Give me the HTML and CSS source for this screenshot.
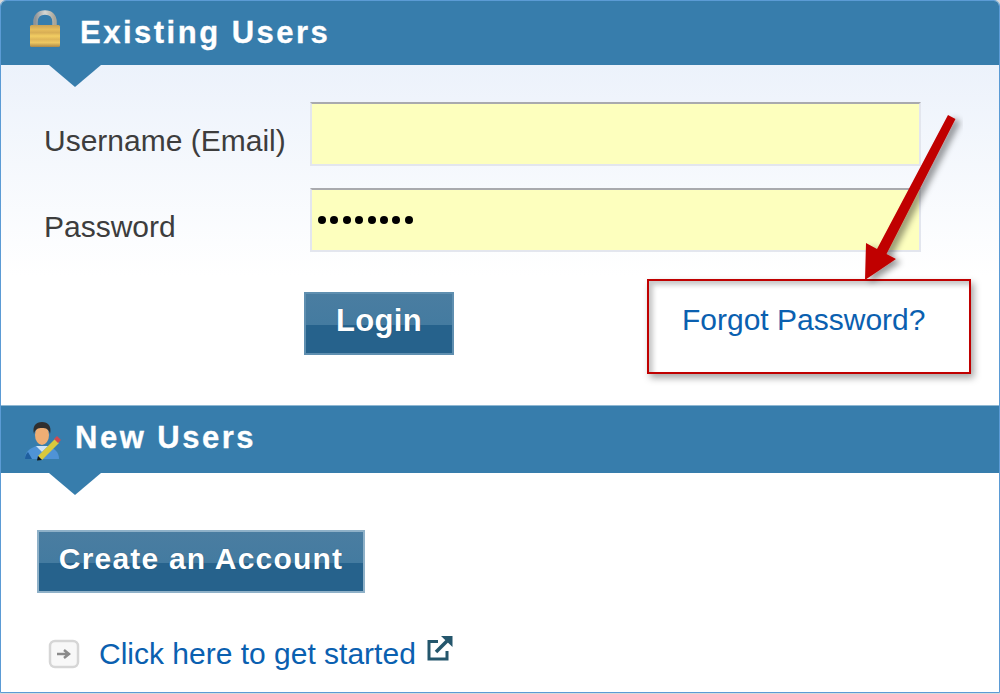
FILE: index.html
```html
<!DOCTYPE html>
<html>
<head>
    <title>Login</title>
    <link rel="stylesheet" href="styles.css">
</head>
<body>
    <div class="frame">
        <div class="bar bar-existing">
            <svg class="lock-icon" width="32" height="38" viewBox="0 0 32 38">
                <defs>
                    <linearGradient id="lockBody" x1="0" y1="0" x2="0" y2="1">
                        <stop offset="0" stop-color="#c9a257"/>
                        <stop offset="0.2" stop-color="#e6bd5c"/>
                        <stop offset="0.35" stop-color="#d8ae55"/>
                        <stop offset="0.5" stop-color="#f2cd62"/>
                        <stop offset="0.65" stop-color="#dfb658"/>
                        <stop offset="0.8" stop-color="#eec862"/>
                        <stop offset="1" stop-color="#ab8848"/>
                    </linearGradient>
                    <linearGradient id="lockShackle" x1="0" y1="0" x2="1" y2="0">
                        <stop offset="0" stop-color="#8f9498"/>
                        <stop offset="0.5" stop-color="#d8d8d4"/>
                        <stop offset="1" stop-color="#a9a69a"/>
                    </linearGradient>
                </defs>
                <path d="M6.500 18V12C6.500 6 10 2.500 16 2.500S25.500 6 25.500 12V18" fill="none" stroke="url(#lockShackle)" stroke-width="4.500"/>
                <rect x="1" y="15" width="30" height="22" rx="1.500" fill="url(#lockBody)"/>
            </svg>
            <h2 class="title-existing">Existing Users</h2>
        </div>
        <div class="notch"></div>

        <div class="existing">
            <div class="field">
                <label class="field-label" for="username">Username (Email)</label>
                <input class="field-input" type="text" id="username">
            </div>
            <div class="field field-password">
                <label class="field-label" for="password">Password</label>
                <div class="field-input password-dots" id="password">
                    <span></span><span></span><span></span><span></span><span></span><span></span><span></span><span></span>
                </div>
            </div>
            <div class="actions">
                <button class="btn btn-login"><span>Login</span></button>
                <div class="callout"><a href="#">Forgot Password?</a></div>
            </div>
        </div>

        <div class="bar bar-new">
            <svg class="user-icon" width="38" height="40" viewBox="0 0 38 40">
                <path d="M1 38C1 31 5 28 12 25H24C31 28 35 31 35 38Z" fill="#4f93d6"/>
                <path d="M1 38C1 35 2 33 4 31L8 38Z" fill="#1f5f9e"/>
                <path d="M12 25L18 31L24 25Z" fill="#cfe4f6"/>
                <ellipse cx="18" cy="14" rx="7" ry="10" fill="#eeae74"/>
                <path d="M10 13C8 5 12 1 18 1S28 5 26 13C25 8 22 7 18 7S11 8 10 13Z" fill="#2f2f30"/>
                <path d="M14 35L31 18L35 22L18 39Z" fill="#d9c83c"/>
                <path d="M30 18L33 15L37 19L34 22Z" fill="#cf4a50"/>
                <path d="M14 35L13 39.500L18 39Z" fill="#101214"/>
            </svg>
            <h2 class="title-new">New Users</h2>
        </div>
        <div class="notch"></div>

        <div class="new-users">
            <button class="btn btn-create"><span>Create an Account</span></button>
            <div class="started">
                <svg width="32" height="30" viewBox="0 0 32 30">
                    <rect x="2" y="2" width="28" height="26" rx="5" fill="#f8f8f8" stroke="#d6d6d6" stroke-width="2.500"/>
                    <path d="M9 15H21M16 11L21 15L16 19" fill="none" stroke="#8b8b8b" stroke-width="2.500"/>
                </svg>
                <a href="#">Click here to get started</a>
                <svg class="external" width="26" height="26" viewBox="0 0 26 26">
                    <path d="M11 6.500H2V24H20V16" fill="none" stroke="#24566c" stroke-width="3"/>
                    <path d="M9 17L20 6" stroke="#24566c" stroke-width="3.500"/>
                    <path d="M14 1H25.500V12Z" fill="#24566c"/>
                </svg>
            </div>
        </div>

        <svg class="arrow" width="120" height="190" viewBox="0 0 120 190">
            <defs>
                <filter id="arrowShadow" x="-30%" y="-30%" width="160%" height="160%">
                    <feDropShadow dx="5" dy="3" stdDeviation="3" flood-color="#000" flood-opacity="0.4"/>
                </filter>
            </defs>
            <path d="M105 5L112.500 9L43.500 144L53 149L22 170L23 133L34 139Z" fill="#c00000" filter="url(#arrowShadow)"/>
        </svg>
    </div>
</body>
</html>
```
FILE: styles.css
```css
* {
    box-sizing: border-box;
}
html, body {
    margin: 0;
    padding: 0;
}
body {
    width: 1000px;
    height: 694px;
    overflow: hidden;
    font-family: "Liberation Sans", Arial, sans-serif;
    background-color: #d9d9d9;
}
.frame {
    position: relative;
    height: 693px;
    background-color: white;
    border: 1px solid #5b9bd5;
    border-radius: 6px 6px 0 0;
    overflow: hidden;
}
.bar {
    display: flex;
    align-items: center;
    background-color: #377dac;
    color: white;
}
.bar h2 {
    margin: 0;
    font-weight: bold;
    -webkit-text-stroke: 0.3px white;
}
.bar-existing {
    height: 64px;
    padding-left: 28px;
}
.lock-icon {
    margin-bottom: 8px;
}
.title-existing {
    margin-left: 19px !important;
    font-size: 31px;
    letter-spacing: 2.500px;
}
.notch {
    width: 0;
    height: 0;
    margin-left: 48px;
    border-left: 26px solid transparent;
    border-right: 26px solid transparent;
    border-top: 22px solid #377dac;
    margin-bottom: -22px;
    position: relative;
}
.existing {
    height: 340px;
    padding: 37px 0 0 43px;
    background: linear-gradient(#ecf2fb, #ffffff 62%);
}
.field {
    display: flex;
    align-items: center;
    height: 64px;
}
.field-password {
    margin-top: 22px;
}
.field-label {
    width: 266px;
    padding-top: 14px;
    font-size: 30px;
    color: #3d3d3d;
}
.field-input {
    width: 611px;
    height: 64px;
    background-color: #fdffbe;
    border: 2px solid #e3e6ee;
    border-top-color: #a9aaae;
    outline: none;
}
.password-dots {
    display: flex;
    align-items: center;
    gap: 4.400px;
    padding-left: 6px;
}
.password-dots span {
    width: 8px;
    height: 8px;
    border-radius: 50%;
    background-color: black;
}
.actions {
    display: flex;
    align-items: flex-start;
    margin-top: 27px;
    margin-left: 260px;
}
.btn {
    padding: 0 0 6px;
    color: white;
    font-family: inherit;
    font-weight: bold;
    border: 2px solid #5f8fb0;
    background: linear-gradient(#4a7da1 0, #447ba0 52%, #26628c 53%, #26628c 100%);
    text-shadow: 0 0 1px #1f4f70;
}
.btn-login {
    width: 150px;
    height: 63px;
    margin-top: 13px;
    font-size: 31px;
    letter-spacing: 0.300px;
}
.callout {
    width: 324px;
    height: 95px;
    margin-left: 193px;
    padding: 22px 0 0 33px;
    border: 2px solid #c00000;
    box-shadow: 3px 4px 7px rgba(0, 0, 0, 0.35), inset 4px 4px 5px rgba(0, 0, 0, 0.22);
    background-color: white;
    font-size: 30px;
}
a {
    color: #0a60b0;
    text-decoration: none;
}
.bar-new {
    height: 68px;
    padding-left: 23px;
    margin-top: 0;
    border-top: 1px solid #8fb8d3;
}
.title-new {
    margin-left: 13px !important;
    margin-bottom: 4px !important;
    font-size: 31px;
    letter-spacing: 2.500px;
}
.user-icon {
    margin-top: 2px;
}
.new-users {
    padding: 57px 0 0 36px;
}
.btn-create {
    display: block;
    width: 328px;
    height: 63px;
    font-size: 30px;
    letter-spacing: 1.200px;
    border-color: #8fb1c8;
}
.started {
    display: flex;
    align-items: center;
    margin-top: 42px;
    margin-left: 11px;
    font-size: 30px;
}
.started a {
    margin-left: 19px;
}
.external {
    margin: 0 0 12px 11px;
}
.arrow {
    position: absolute;
    left: 842px;
    top: 109px;
}
```
